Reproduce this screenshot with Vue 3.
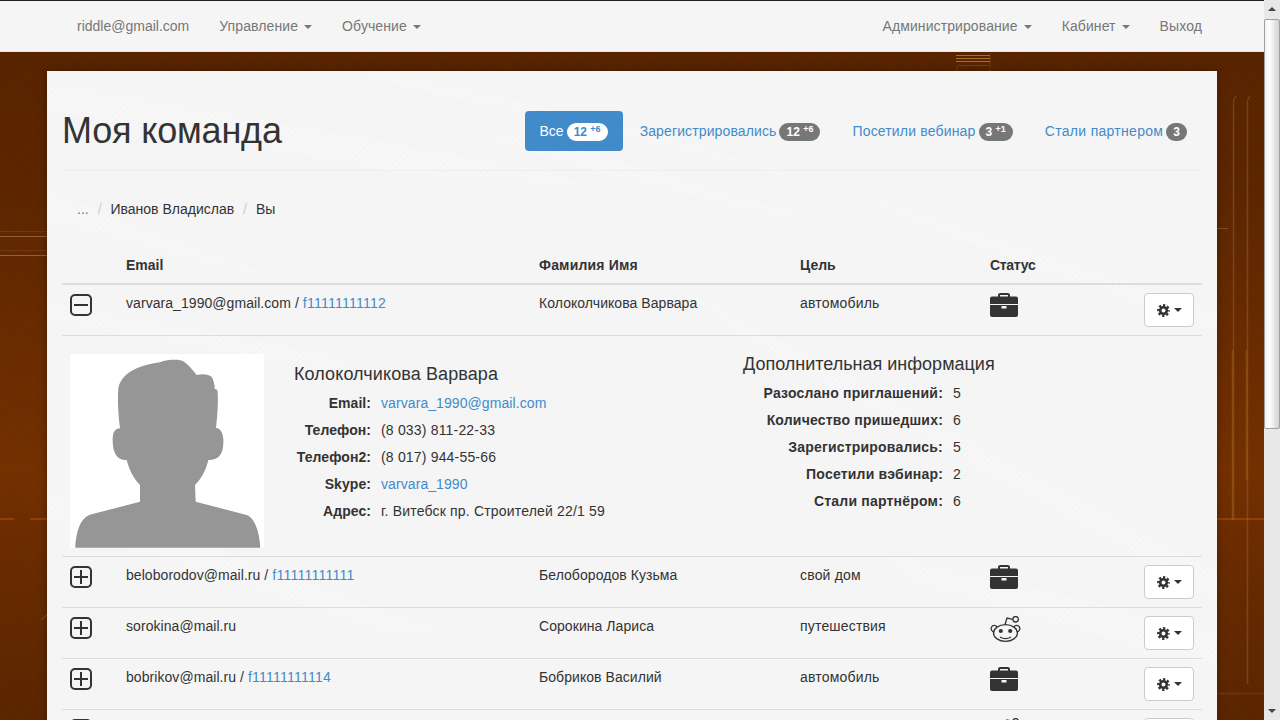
<script setup>
const pills = [
  { label: 'Все', count: 12, plus: '+6', active: true },
  { label: 'Зарегистрировались', count: 12, plus: '+6' },
  { label: 'Посетили вебинар', count: 3, plus: '+1' },
  { label: 'Стали партнером', count: 3 },
]
const contacts = [
  { k: 'Email:', v: 'varvara_1990@gmail.com', link: true },
  { k: 'Телефон:', v: '(8 033) 811-22-33' },
  { k: 'Телефон2:', v: '(8 017) 944-55-66' },
  { k: 'Skype:', v: 'varvara_1990', link: true },
  { k: 'Адрес:', v: 'г. Витебск пр. Строителей 22/1 59' },
]
const stats = [
  { k: 'Разослано приглашений:', v: 5 },
  { k: 'Количество пришедших:', v: 6 },
  { k: 'Зарегистрировались:', v: 5 },
  { k: 'Посетили вэбинар:', v: 2 },
  { k: 'Стали партнёром:', v: 6 },
]
const rows = [
  { email: 'varvara_1990@gmail.com', login: 'f11111111112', name: 'Колоколчикова Варвара', goal: 'автомобиль', status: 'case', open: true },
  { email: 'beloborodov@mail.ru', login: 'f11111111111', name: 'Белобородов Кузьма', goal: 'свой дом', status: 'case' },
  { email: 'sorokina@mail.ru', name: 'Сорокина Лариса', goal: 'путешествия', status: 'reddit' },
  { email: 'bobrikov@mail.ru', login: 'f11111111114', name: 'Бобриков Василий', goal: 'автомобиль', status: 'case' },
  { email: '', name: '', goal: '', status: 'reddit' },
]
</script>

<template>
  <div class="page">
    <div class="stage">
      <svg class="backdrop" width="1264" height="720" viewBox="0 0 1264 720" aria-hidden="true">
        <g fill="none" stroke="#b5835f" stroke-opacity=".6">
          <path d="M0 236.5H47M0 255.5H47" />
          <path d="M0 231.5H47M0 250.5H47" stroke-opacity=".18" />
          <path d="M1217 228.5H1228" stroke-opacity=".45" />
          <path d="M1233.500 520V103q0-6 3-6M1247.500 684V103q0-6 3-6" stroke-opacity=".3" stroke-width="1.5" />
          <path d="M1217 693.500H1264" stroke-opacity=".16" stroke-width="2" />
        </g>
        <path d="M1232.500 350V520M1246.500 350V480" stroke="#b5791f" stroke-opacity=".35" stroke-width="1.5" />
        <path d="M0 519H14M30 519H47M1217 519H1264" stroke="#c65c0c" stroke-opacity=".4" stroke-width="2" />
        <path d="M41 620L50 612" stroke="#c58a3a" stroke-opacity=".45" />
        <g fill="none" stroke="#a8701f">
          <path d="M956 55.500H990M956 58.500H990M956 61.500H990" stroke-width="1.200" />
          <path d="M957 66V71M990 53V71" stroke-opacity=".35" />
          <path d="M958 65.500H989" stroke-opacity=".35" />
        </g>
      </svg>

      <nav class="navbar">
        <ul class="nav-list">
          <li class="account"><a>riddle@gmail.com</a></li>
          <li><a>Управление<b class="caret"></b></a></li>
          <li><a>Обучение<b class="caret"></b></a></li>
        </ul>
        <ul class="nav-list">
          <li><a>Администрирование<b class="caret"></b></a></li>
          <li><a>Кабинет<b class="caret"></b></a></li>
          <li><a>Выход</a></li>
        </ul>
      </nav>

      <main class="panel">
        <svg class="hatch" width="1170" height="650" viewBox="0 0 1170 650" aria-hidden="true">
          <defs>
            <pattern id="hatch-lines" width="4" height="4" patternUnits="userSpaceOnUse" patternTransform="rotate(45)">
              <rect width="1" height="4" fill="#fff" />
            </pattern>
          </defs>
          <g fill="url(#hatch-lines)">
            <path d="M0 10L490 98L560 118L340 100L0 40Z" />
            <path d="M340 0L640 70L760 110L560 60L300 4Z" />
            <path d="M0 120L240 210L150 190L0 150Z" />
            <path d="M470 60L780 150L700 140L440 70Z" />
            <path d="M780 110L1170 240V262L860 150Z" />
            <path d="M0 230L320 290L280 300L0 250Z" />
            <path d="M640 220L1170 500V530L700 270Z" />
            <path d="M0 420L400 560L330 560L0 450Z" />
            <path d="M830 480L1170 560V600L860 510Z" />
          </g>
        </svg>

        <header class="page-header">
          <h1>Моя команда</h1>
          <ul class="pills">
            <li v-for="p in pills" :key="p.label" :class="{ active: p.active }">
              <a>{{ p.label }}<span class="badge">{{ p.count }}<template v-if="p.plus">&nbsp;<sup>{{ p.plus }}</sup></template></span></a>
            </li>
          </ul>
        </header>

        <ul class="breadcrumb">
          <li class="muted">...</li>
          <li>Иванов Владислав</li>
          <li>Вы</li>
        </ul>

        <table class="team">
          <colgroup>
            <col class="c1" /><col class="c2" /><col class="c3" /><col class="c4" /><col class="c5" />
          </colgroup>
          <thead>
            <tr>
              <th></th>
              <th>Email</th>
              <th>Фамилия Имя</th>
              <th>Цель</th>
              <th>Статус</th>
            </tr>
          </thead>
          <tbody>
            <template v-for="r in rows" :key="r.email + r.name">
              <tr>
                <td>
                  <svg class="toggle" width="22" height="22" viewBox="0 0 22 22" fill="none" stroke="#333" stroke-width="2">
                    <rect x="1" y="1" width="20" height="20" rx="4" />
                    <path d="M4 11H18" />
                    <path v-if="!r.open" d="M11 4V18" />
                  </svg>
                </td>
                <td>{{ r.email }}<template v-if="r.login"> / <a class="link login">{{ r.login }}</a></template></td>
                <td>{{ r.name }}</td>
                <td class="goal">{{ r.goal }}</td>
                <td class="status-cell">
                  <svg v-if="r.status === 'case'" class="status" width="28" height="24" viewBox="0 0 28 24">
                    <path d="M9 5V2.200C9 1.500 9.500 1 10.200 1H17.800C18.500 1 19 1.500 19 2.200V5" fill="none" stroke="#333" stroke-width="2" />
                    <path d="M2 3.500H26a2 2 0 0 1 2 2V11H0V5.500a2 2 0 0 1 2-2Z" fill="#333" />
                    <path d="M0 12H28V22a2 2 0 0 1-2 2H2a2 2 0 0 1-2-2Z" fill="#333" />
                    <rect x="11.500" y="13" width="5" height="2.500" fill="#f5f5f5" />
                  </svg>
                  <svg v-else class="status" width="31" height="26" viewBox="0 0 31 26" fill="none" stroke="#333" stroke-width="1.300">
                    <ellipse cx="15.500" cy="17" rx="12" ry="8.300" fill="#f5f5f5" />
                    <path d="M4.300 15.800A3.200 3.200 0 1 1 7 10.800M26.700 15.800A3.200 3.200 0 1 0 24 10.800" />
                    <path d="M15 8.500L17 2L22.800 3.300" />
                    <circle cx="25.600" cy="3.300" r="2.700" />
                    <circle cx="10.800" cy="15" r="2.100" fill="#333" stroke="none" />
                    <circle cx="20.200" cy="15" r="2.100" fill="#333" stroke="none" />
                    <path d="M10 21Q15.500 24.200 21 21" />
                  </svg>
                  <button class="action" type="button">
                    <svg width="13" height="13" viewBox="0 0 13 13">
                      <circle cx="6.500" cy="6.500" r="3.300" fill="none" stroke="#333" stroke-width="2.600" />
                      <circle cx="6.500" cy="6.500" r="5.200" fill="none" stroke="#333" stroke-width="2.400" stroke-dasharray="2.300 1.784" stroke-dashoffset="1.150" />
                    </svg>
                    <b class="caret dark"></b>
                  </button>
                </td>
              </tr>
              <tr v-if="r.open">
                <td colspan="5" class="detail">
                  <div class="detail-inner">
                    <div class="avatar">
                      <svg width="194" height="194" viewBox="30 27 582 582">
                        <path fill="#969696" d="M175 130C180 100 205 85 208 82C225 72 245 60 300 52L310 48C330 44 360 42 372 50C388 60 400 78 410 90C425 86 445 86 455 96C462 106 462 120 465 125L462 130L472 135C476 160 472 215 468 248C482 250 490 265 490 285C491 320 482 345 445 345C438 375 425 400 405 420L407 470L560 510C582 518 598 555 601 608L46 608C48 560 62 515 95 508L240 470L240 420C220 400 208 375 200 345C170 347 158 322 158 285C158 262 165 250 180 250C175 210 172 170 175 130Z" />
                      </svg>
                    </div>
                    <section class="contacts">
                      <h4>{{ r.name }}</h4>
                      <dl>
                        <div v-for="c in contacts" :key="c.k">
                          <dt>{{ c.k }}</dt>
                          <dd :class="{ link: c.link }">{{ c.v }}</dd>
                        </div>
                      </dl>
                    </section>
                    <section class="extra">
                      <h4>Дополнительная информация</h4>
                      <dl>
                        <div v-for="s in stats" :key="s.k">
                          <dt>{{ s.k }}</dt>
                          <dd>{{ s.v }}</dd>
                        </div>
                      </dl>
                    </section>
                  </div>
                </td>
              </tr>
            </template>
          </tbody>
        </table>
      </main>
    </div>

    <aside class="scrollbar" aria-hidden="true">
      <span class="arrow up"></span>
      <span class="thumb"></span>
      <span class="arrow down"></span>
    </aside>
  </div>
</template>

<style>
html, body { margin: 0; height: 100%; overflow: hidden; }
</style>

<style scoped>
.page {
  display: flex;
  width: 1280px;
  height: 720px;
  overflow: hidden;
  font-family: "Liberation Sans", Arial, sans-serif;
  font-size: 14px;
  line-height: 20px;
  color: #333;
}
.stage {
  position: relative;
  width: 1264px;
  height: 720px;
  display: flex;
  flex-direction: column;
  overflow: hidden;
  background:
    repeating-linear-gradient(45deg, rgba(0, 0, 0, .06) 0 1px, transparent 1px 3px),
    linear-gradient(180deg, #582300 0, #5f2700 200px, #763100 470px, #6b2c00 560px, #5c2600 720px);
}
.backdrop { position: absolute; inset: 0; }
.navbar {
  position: relative;
  flex: none;
  display: flex;
  justify-content: space-between;
  padding: 0 47px 0 62px;
  background: #f5f5f5;
  border-top: 1px solid #222;
  border-bottom: 1px solid #e7e7e7;
}
.nav-list { display: flex; margin: 0; padding: 0; list-style: none; }
.nav-list a { display: block; padding: 15px; color: #777; letter-spacing: .1px; }
.nav-list .account a { letter-spacing: 0; }
.caret {
  display: inline-block;
  width: 0;
  height: 0;
  margin-left: 6px;
  vertical-align: middle;
  border-top: 4px solid #777;
  border-left: 4px solid transparent;
  border-right: 4px solid transparent;
}
.caret.dark { border-top-color: #333; margin-left: 4px; }
.panel {
  position: relative;
  flex: none;
  box-sizing: border-box;
  width: 1170px;
  height: 668px;
  margin: 19px 0 0 47px;
  padding: 0 15px;
  background: #f5f5f5;
  box-shadow: 0 0 8px rgba(0, 0, 0, .35);
  overflow: hidden;
}
.hatch { position: absolute; left: 0; top: 0; opacity: .55; }
.page-header, .breadcrumb, .team { position: relative; }
.page-header {
  display: flex;
  justify-content: space-between;
  align-items: center;
  margin: 40px 0 20px;
  padding-bottom: 19px;
  border-bottom: 1px solid #eee;
}
h1 { margin: 0; font-size: 36px; line-height: 40px; font-weight: 500; letter-spacing: -.18px; }
.pills { display: flex; gap: 2px; margin: 0; padding: 0; list-style: none; }
.pills a { display: block; padding: 10px 15px; border-radius: 4px; color: #428bca; letter-spacing: .17px; }
.pills li:nth-child(2) a { letter-spacing: .12px; }
.pills li:nth-child(4) a { letter-spacing: .3px; }
.pills .active a { background: #428bca; color: #fff; letter-spacing: 0; }
.badge {
  display: inline-block;
  box-sizing: border-box;
  min-width: 10px;
  margin-left: 3px;
  padding: 3px 7px;
  font-size: 12px;
  font-weight: 700;
  line-height: 12px;
  letter-spacing: 0;
  color: #fff;
  vertical-align: middle;
  text-align: center;
  white-space: nowrap;
  background: #777;
  border-radius: 10px;
}
.pills a .badge { letter-spacing: 0; }
.active .badge { background: #fff; color: #428bca; }
sup { position: relative; top: -.5em; font-size: 75%; line-height: 0; vertical-align: baseline; }
.breadcrumb {
  display: flex;
  gap: 4px;
  margin: 0 0 20px;
  padding: 8px 15px;
  list-style: none;
}
.breadcrumb li + li::before { content: "/\00a0"; padding: 0 5px; color: #ccc; }
.muted { color: #777; }
.team { width: 1140px; table-layout: fixed; border-collapse: collapse; border-spacing: 0; }
.c1 { width: 56px; }
.c2 { width: 413px; }
.c3 { width: 261px; }
.c4 { width: 190px; }
.c5 { width: 220px; }
th, td { padding: 8px; text-align: left; vertical-align: top; }
th { border-bottom: 2px solid #ddd; font-weight: 700; }
th:nth-child(3) { letter-spacing: .18px; }
th:nth-child(5) { letter-spacing: -.3px; }
td { border-top: 1px solid #ddd; height: 34px; letter-spacing: .06px; }
.goal { letter-spacing: .18px; }
.login { letter-spacing: .25px; }
thead + tbody tr:first-child td { border-top: 0; }
.toggle, .status { display: block; }
.toggle { margin-top: 1px; }
.status { float: left; }
.status-cell::after { content: ""; display: block; clear: both; }
.link { color: #428bca; }
.action {
  float: right;
  box-sizing: border-box;
  display: flex;
  align-items: center;
  justify-content: center;
  width: 50px;
  height: 34px;
  padding: 0;
  background: #fff;
  border: 1px solid #ccc;
  border-radius: 4px;
}
.detail { padding: 18px 8px 8px; height: auto; letter-spacing: 0; }
.detail-inner { display: flex; }
.avatar { flex: none; width: 194px; height: 194px; background: #fff; }
.avatar svg { display: block; }
h4 { margin: 0 0 5px; font-size: 18px; line-height: 20px; font-weight: 500; }
.contacts { flex: none; width: 449px; margin: 10px 0 0 30px; }
.contacts h4 { letter-spacing: .1px; }
.extra { flex: none; }
dl { margin: 0; }
dl > div { display: flex; gap: 10px; height: 27px; align-items: center; }
dt { flex: none; font-weight: 700; text-align: right; }
dd { margin: 0; letter-spacing: .18px; }
dd.link { letter-spacing: .08px; }
.contacts dt { width: 77px; letter-spacing: .06px; }
.extra dt { width: 200px; letter-spacing: .2px; }
.scrollbar {
  flex: none;
  position: relative;
  width: 16px;
  height: 720px;
  display: flex;
  flex-direction: column;
  background: #e8e8e8;
}
.thumb {
  box-sizing: border-box;
  width: 16px;
  height: 410px;
  margin-top: 19px;
  background: linear-gradient(90deg, #f4f4f4, #fff 35%, #e4e4e4 70%, #d4d4d4);
  border: 1px solid #a0a0a0;
  border-radius: 2px;
}
.arrow { position: absolute; left: 4px; width: 0; height: 0; border-left: 4px solid transparent; border-right: 4px solid transparent; }
.arrow.up { top: 7px; border-bottom: 4px solid #444; }
.arrow.down { bottom: 7px; border-top: 4px solid #444; }
</style>
